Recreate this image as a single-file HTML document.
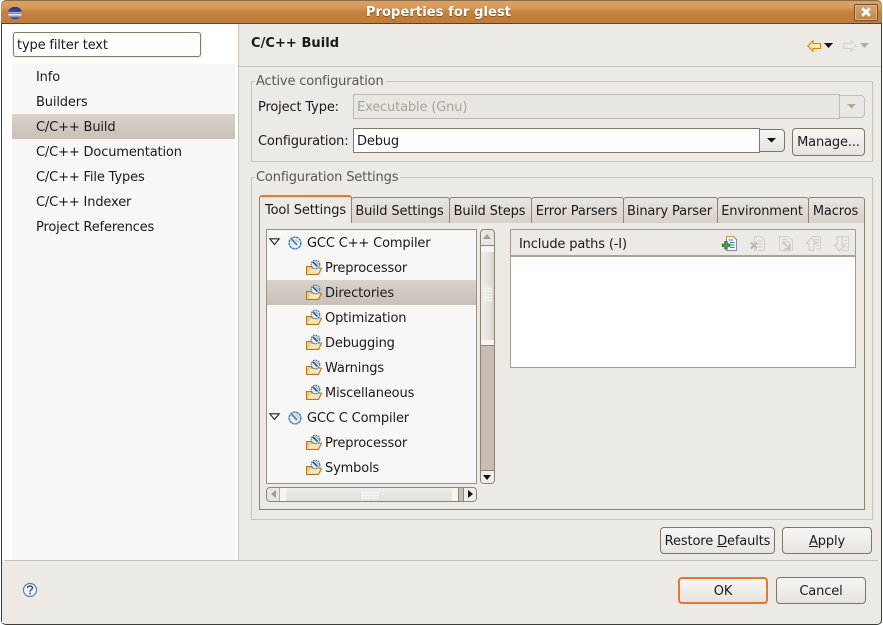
<!DOCTYPE html>
<html><head><meta charset="utf-8">
<style>
html,body{margin:0;padding:0;background:#fff}
body{width:883px;height:625px;overflow:hidden;position:relative;font-family:"DejaVu Sans","Liberation Sans",sans-serif;font-size:13px;color:#1a1a1a}
.a,.t{position:absolute}
.t{white-space:nowrap;line-height:16px;margin-top:2px;letter-spacing:-.15px}
.btn{position:absolute;box-sizing:border-box;border:1px solid #7f766b;border-radius:4px;background:linear-gradient(#f8f6f4,#efedea 50%,#e6e3df);text-align:center;white-space:nowrap;letter-spacing:-.13px}
.tab{position:absolute;box-sizing:border-box;top:197px;height:26px;padding-right:2px;border:1px solid #8d8478;border-bottom:0;background:linear-gradient(#e9e5e0,#d6d0c9);border-radius:3px 3px 0 0;text-align:center;line-height:27px;white-space:nowrap;letter-spacing:-.13px}
.sel{position:absolute;background:linear-gradient(#d9d2ca,#c9c1b7)}
svg{position:absolute;overflow:visible}
u{text-decoration-thickness:1px}
</style></head>
<body>
<svg width="0" height="0" style="position:absolute">
<defs>
<symbol id="gear" viewBox="0 0 14 14" overflow="visible">
<circle cx="7" cy="7" r="5.9" fill="#e4eff7" stroke="#3d84b8" stroke-width="1.5" stroke-dasharray="2.6 .6"/>
<path d="M3.5 3 L9 9" stroke="#6a8095" stroke-width="1.8"/>
<path d="M7.5 3.5L11 6.5" stroke="#b6c8d6" stroke-width="1.3"/>
</symbol>
<symbol id="fold" viewBox="0 0 16 15" overflow="visible">
<path d="M.5 6.5H6V8H15L15.5 8.5L12.5 14.5H.5Z" fill="#f5c67a" stroke="#b8742a"/>
<path d="M1.5 13.5L4.5 8.5H14.5L12 13.5Z" fill="#fce6b4"/>
<circle cx="9.5" cy="4.5" r="4.3" fill="#e2eef6" stroke="#3b78a8" stroke-width="1.1" stroke-dasharray="1.8 .7"/>
<path d="M7 2L11.5 6.5" stroke="#3d5268" stroke-width="1.6"/>
<path d="M9.5 1.5L13 4.5" stroke="#8fa6b8" stroke-width="1"/>
</symbol>
</defs>
</svg>

<!-- title bar -->
<div class="a" style="left:1px;top:0;width:881px;height:24px;background:linear-gradient(#dca266 0,#d79a5b 30%,#c5823f 50%,#bf7b38 100%);border-radius:5px 5px 0 0;box-shadow:inset 0 1px 0 #8a6a45"></div>
<div class="a" style="left:1px;top:23px;width:881px;height:1px;background:#5d4326"></div>
<div class="a" style="left:8px;top:7px;width:14px;height:12px;border-radius:7px;background:linear-gradient(#2e2c74,#3f4a9c 42%,#fff 46%,#39408f 52%,#fff 58%,#262468)"></div>
<div class="t" style="left:0;width:877px;top:3px;text-align:center;font-weight:bold;color:#fff;letter-spacing:.1px;text-shadow:0 1px 1px #7d5126">Properties for glest</div>
<div class="a" style="left:854px;top:4px;width:24px;height:17px;box-sizing:border-box;border:1px solid #74502c;border-radius:2px;background:linear-gradient(#d9a56e,#c58341);box-shadow:inset 0 0 0 1px #dfb284"></div>
<svg style="left:861px;top:7px" width="10" height="10"><path d="M1.2 1.2L8.8 8.8M8.8 1.2L1.2 8.8" stroke="#fff" stroke-width="2.8"/></svg>

<!-- window body -->
<div class="a" style="left:1px;top:24px;width:881px;height:600px;background:#edeae6"></div>
<div class="a" style="left:2px;top:24px;width:236px;height:536px;background:#fff;box-sizing:border-box"></div>
<div class="a" style="left:238px;top:24px;width:1px;height:536px;background:#c8c4bd"></div>
<div class="a" style="left:12px;top:32px;width:190px;height:26px;background:#f0eeea"></div>
<div class="a" style="left:13px;top:32px;width:188px;height:25px;box-sizing:border-box;border:1px solid #85796b;border-radius:3px;background:#fff"></div>
<div class="t" style="left:17px;top:36px">type filter text</div>

<div class="a" style="left:12px;top:64px;width:223px;height:496px;background:#f9f7f5"></div>
<div class="sel" style="left:12px;top:114px;width:223px;height:25px"></div>
<div class="t" style="left:36px;top:68px">Info</div>
<div class="t" style="left:36px;top:93px">Builders</div>
<div class="t" style="left:36px;top:118px">C/C++ Build</div>
<div class="t" style="left:36px;top:143px">C/C++ Documentation</div>
<div class="t" style="left:36px;top:168px">C/C++ File Types</div>
<div class="t" style="left:36px;top:193px">C/C++ Indexer</div>
<div class="t" style="left:36px;top:218px">Project References</div>

<!-- header -->
<div class="t" style="left:251px;top:34px;font-weight:bold;letter-spacing:.05px">C/C++ Build</div>
<div class="a" style="left:239px;top:66px;width:642px;height:1px;background:#c8c4bd"></div>
<svg style="left:807px;top:40px" width="18" height="12"><path d="M.8 6L6 .8V3.5H13.5V8.5H6V11.2Z" fill="#fde9a8" stroke="#c98a10" stroke-width="1.1"/></svg>
<svg style="left:824px;top:43px" width="10" height="6"><path d="M0 0H9L4.5 5Z" fill="#111"/></svg>
<svg style="left:843px;top:40px" width="18" height="12"><path d="M13.2 6L8 .8V3.5H.8V8.5H8V11.2Z" fill="#edeae6" stroke="#d6d3cd" stroke-width="1.1"/></svg>
<svg style="left:860px;top:43px" width="10" height="6"><path d="M0 0H9L4.5 5Z" fill="#b5ada2"/></svg>

<!-- Active configuration -->
<div class="a" style="left:251px;top:81px;width:622px;height:81px;box-sizing:border-box;border:1px solid #c8c4bd"></div>
<div class="t" style="left:254px;top:72px;background:#edeae6;padding:0 2px;color:#5a5650">Active configuration</div>
<div class="t" style="left:258px;top:98px">Project Type:</div>
<div class="a" style="left:353px;top:94px;width:487px;height:25px;box-sizing:border-box;border:1px solid #bdb7ae;background:#e9e6e1"></div>
<div class="t" style="left:357px;top:98px;color:#a8a39b">Executable (Gnu)</div>
<div class="a" style="left:839px;top:95px;width:26px;height:23px;box-sizing:border-box;border:1px solid #c4bfb6;border-radius:0 4px 4px 0;background:#ebe8e3"></div>
<svg style="left:847px;top:104px" width="10" height="6"><path d="M0 0H9L4.5 4.5Z" fill="#b0a89d"/></svg>

<div class="t" style="left:258px;top:132px">Configuration:</div>
<div class="a" style="left:353px;top:128px;width:407px;height:25px;box-sizing:border-box;border:1px solid #85796b;background:#fff"></div>
<div class="t" style="left:357px;top:132px">Debug</div>
<div class="btn" style="left:759px;top:129px;width:26px;height:23px;border-radius:0 4px 4px 0"></div>
<svg style="left:767px;top:138px" width="10" height="6"><path d="M0 0H9L4.5 4.5Z" fill="#111"/></svg>
<div class="btn" style="left:792px;top:128px;width:73px;height:28px;line-height:27px">Manage...</div>

<!-- Configuration Settings -->
<div class="a" style="left:251px;top:177px;width:622px;height:343px;box-sizing:border-box;border:1px solid #c8c4bd"></div>
<div class="t" style="left:254px;top:168px;background:#edeae6;padding:0 2px;color:#5a5650">Configuration Settings</div>

<!-- Tab panel -->
<div class="a" style="left:259px;top:222px;width:606px;height:288px;box-sizing:border-box;border:1px solid #8d8478;background:#edeae6"></div>
<div class="tab" style="left:351px;width:99px">Build Settings</div>
<div class="tab" style="left:449px;width:83px">Build Steps</div>
<div class="tab" style="left:531px;width:93px">Error Parsers</div>
<div class="tab" style="left:623px;width:95px">Binary Parser</div>
<div class="tab" style="left:717px;width:92px">Environment</div>
<div class="tab" style="left:808px;width:57px">Macros</div>
<div class="a" style="left:259px;top:195px;width:93px;height:28px;box-sizing:border-box;border:1px solid #8d8478;border-top:2px solid #e8762c;border-bottom:0;border-radius:3px 3px 0 0;background:#edeae6;text-align:center;line-height:28px;letter-spacing:-.13px">Tool Settings</div>

<!-- Tree -->
<div class="a" style="left:266px;top:229px;width:211px;height:255px;box-sizing:border-box;border:1px solid #9a9084;background:#f9f7f5"></div>
<div class="sel" style="left:267px;top:280px;width:209px;height:25px"></div>
<svg style="left:269px;top:238px" width="12" height="8"><path d="M.8.8H10.2L5.5 6.5Z" fill="#f9f7f5" stroke="#222" stroke-width="1.1"/></svg>
<svg style="left:269px;top:413px" width="12" height="8"><path d="M.8.8H10.2L5.5 6.5Z" fill="#f9f7f5" stroke="#222" stroke-width="1.1"/></svg>
<svg style="left:288px;top:236px" width="14" height="14"><use href="#gear"/></svg>
<svg style="left:288px;top:411px" width="14" height="14"><use href="#gear"/></svg>
<svg style="left:306px;top:260px" width="16" height="15"><use href="#fold"/></svg>
<svg style="left:306px;top:285px" width="16" height="15"><use href="#fold"/></svg>
<svg style="left:306px;top:310px" width="16" height="15"><use href="#fold"/></svg>
<svg style="left:306px;top:335px" width="16" height="15"><use href="#fold"/></svg>
<svg style="left:306px;top:360px" width="16" height="15"><use href="#fold"/></svg>
<svg style="left:306px;top:385px" width="16" height="15"><use href="#fold"/></svg>
<svg style="left:306px;top:435px" width="16" height="15"><use href="#fold"/></svg>
<svg style="left:306px;top:460px" width="16" height="15"><use href="#fold"/></svg>
<div class="t" style="left:307px;top:234px">GCC C++ Compiler</div>
<div class="t" style="left:325px;top:259px">Preprocessor</div>
<div class="t" style="left:325px;top:284px">Directories</div>
<div class="t" style="left:325px;top:309px">Optimization</div>
<div class="t" style="left:325px;top:334px">Debugging</div>
<div class="t" style="left:325px;top:359px">Warnings</div>
<div class="t" style="left:325px;top:384px">Miscellaneous</div>
<div class="t" style="left:307px;top:409px">GCC C Compiler</div>
<div class="t" style="left:325px;top:434px">Preprocessor</div>
<div class="t" style="left:325px;top:459px">Symbols</div>

<!-- V scrollbar -->
<div class="a" style="left:480px;top:229px;width:15px;height:255px;box-sizing:border-box;border:1px solid #8d8478;border-radius:4px;background:#c6bdb3"></div>
<div class="a" style="left:481px;top:230px;width:13px;height:15px;background:#e9e6e1;border-radius:3px 3px 0 0;border-bottom:1px solid #8d8478"></div>
<svg style="left:483px;top:234px" width="9" height="6"><path d="M0 5H8L4 0Z" fill="#a39b90"/></svg>
<div class="a" style="left:481px;top:246px;width:13px;height:100px;box-sizing:border-box;border-bottom:1px solid #8d8478;background:linear-gradient(90deg,#eeebe7,#e8e4df 50%,#d6d1ca)"></div>
<div class="a" style="left:481px;top:246px;width:13px;height:6px;background:#f6f4f1"></div>
<div class="a" style="left:481px;top:340px;width:13px;height:5px;background:#f6f4f1"></div>
<div class="a" style="left:484px;top:287px;width:8px;height:16px;background-image:radial-gradient(#fbfaf8 45%,transparent 55%);background-size:3px 3px"></div>
<div class="a" style="left:481px;top:470px;width:13px;height:13px;background:#efedea;border-top:1px solid #8d8478;border-radius:0 0 3px 3px;box-sizing:border-box"></div>
<svg style="left:483px;top:475px" width="9" height="6"><path d="M0 0H8L4 5Z" fill="#111"/></svg>

<!-- H scrollbar -->
<div class="a" style="left:266px;top:487px;width:211px;height:15px;box-sizing:border-box;border:1px solid #8d8478;border-radius:4px;background:#c6bdb3"></div>
<div class="a" style="left:267px;top:488px;width:13px;height:13px;background:#e9e6e1;border-right:1px solid #b5ada2;box-sizing:border-box;border-radius:3px 0 0 3px"></div>
<svg style="left:271px;top:490px" width="6" height="9"><path d="M5 0V8L0 4Z" fill="#a39b90"/></svg>
<div class="a" style="left:280px;top:488px;width:179px;height:13px;box-sizing:border-box;border-right:1px solid #8d8478;background:linear-gradient(#efedea,#e4e0db)"></div>
<div class="a" style="left:280px;top:488px;width:6px;height:13px;background:#f6f4f1"></div>
<div class="a" style="left:452px;top:488px;width:6px;height:13px;background:#f6f4f1"></div>
<div class="a" style="left:361px;top:491px;width:18px;height:8px;background-image:radial-gradient(#fbfaf8 45%,transparent 55%);background-size:3px 3px"></div>
<div class="a" style="left:463px;top:488px;width:13px;height:13px;box-sizing:border-box;border-left:1px solid #8d8478;background:#efedea;border-radius:0 3px 3px 0"></div>
<svg style="left:468px;top:490px" width="6" height="9"><path d="M0 0V8L5 4Z" fill="#111"/></svg>

<!-- Include paths -->
<div class="a" style="left:510px;top:229px;width:346px;height:139px;box-sizing:border-box;border:1px solid #a69d91;background:#fff"></div>
<div class="a" style="left:511px;top:230px;width:344px;height:25px;background:#edeae6;border-bottom:2px solid #aba295"></div>
<div class="t" style="left:519px;top:235px">Include paths (-I)</div>
<svg style="left:722px;top:236px" width="16" height="16">
<path d="M4.5 .5H11.5L14.5 3.5V14.5H4.5Z" fill="#f4f7fb" stroke="#7c8ba0"/>
<path d="M6.5 4H11M8 6.5H12.5M8 9H12.5M8 11.5H12.5" stroke="#3f72b8"/>
<path d="M2.8 5.5H5.2V8H7.7V10.5H5.2V13H2.8V10.5H.3V8H2.8Z" fill="#4aa83c" stroke="#1d6a1a" stroke-width=".8"/>
<path d="M11 .5H4.5V1.5" stroke="#c8a24a" fill="none"/>
</svg>
<svg style="left:750px;top:236px" width="16" height="16">
<path d="M4.5 .5H11.5L14.5 3.5V14.5H4.5Z" fill="#edeae6" stroke="#d4d1cb"/>
<path d="M7 5H12M8 8H12.5M8 11H12.5" stroke="#d4d1cb"/>
<path d="M1 6.5L7 12.5M7 6.5L1 12.5" stroke="#bdb9b2" stroke-width="2.2"/>
</svg>
<svg style="left:779px;top:236px" width="16" height="16">
<path d="M.5 .5H9L13.5 4V14.5H.5Z" fill="#edeae6" stroke="#d4d1cb"/>
<path d="M3 3.5H8M3 6H11M3 8.5H6" stroke="#d4d1cb"/>
<path d="M4 6L10 12M11 7.5V13H5.5" fill="none" stroke="#c4c0b9" stroke-width="1.4"/>
</svg>
<svg style="left:806px;top:236px" width="16" height="16">
<path d="M6 .5H14.5V13H10M9 3.5H13M10.5 6.5H13M10.5 9.5H13" fill="none" stroke="#d4d1cb"/>
<path d="M5.5 1.5L10.5 7.5H8V14.5H3V7.5H.5Z" fill="#edeae6" stroke="#cfccc5"/>
</svg>
<svg style="left:834px;top:236px" width="16" height="16">
<path d="M7 .5H14.5V14.5H8M10 4.5H13M10.5 7.5H13M10.5 10.5H13" fill="none" stroke="#d4d1cb"/>
<path d="M5.5 15L10.5 9H8V1H3V9H.5Z" fill="#edeae6" stroke="#cfccc5"/>
</svg>

<!-- lower buttons -->
<div class="btn" style="left:660px;top:527px;width:115px;height:27px;line-height:27px">Restore <u>D</u>efaults</div>
<div class="btn" style="left:782px;top:527px;width:90px;height:27px;line-height:27px"><u>A</u>pply</div>
<div class="a" style="left:5px;top:560px;width:873px;height:1px;background:#c2beb7"></div>
<svg style="left:22px;top:582px" width="16" height="16">
<circle cx="8" cy="8" r="6.5" fill="#f4f7fb" stroke="#5b7ba6" stroke-width="1.2"/>
<path d="M5.5 6.2C5.5 3.3 10.5 3.3 10.5 6C10.5 7.8 8 7.6 8 9.6" fill="none" stroke="#3a4f70" stroke-width="1.5"/>
<rect x="7.2" y="10.6" width="1.6" height="1.7" fill="#3a4f70"/>
</svg>
<div class="btn" style="left:678px;top:577px;width:90px;height:27px;line-height:25px;border:2px solid #e8762c">OK</div>
<div class="btn" style="left:776px;top:577px;width:90px;height:27px;line-height:27px">Cancel</div>

<!-- window frame -->
<div class="a" style="left:1px;top:24px;width:881px;height:601px;box-sizing:border-box;border:1px solid #3f3b37;border-top:0;border-radius:0 0 5px 5px"></div>
<div class="a" style="left:2px;top:561px;width:3px;height:62px;background:#edeae6"></div>
</body></html>
